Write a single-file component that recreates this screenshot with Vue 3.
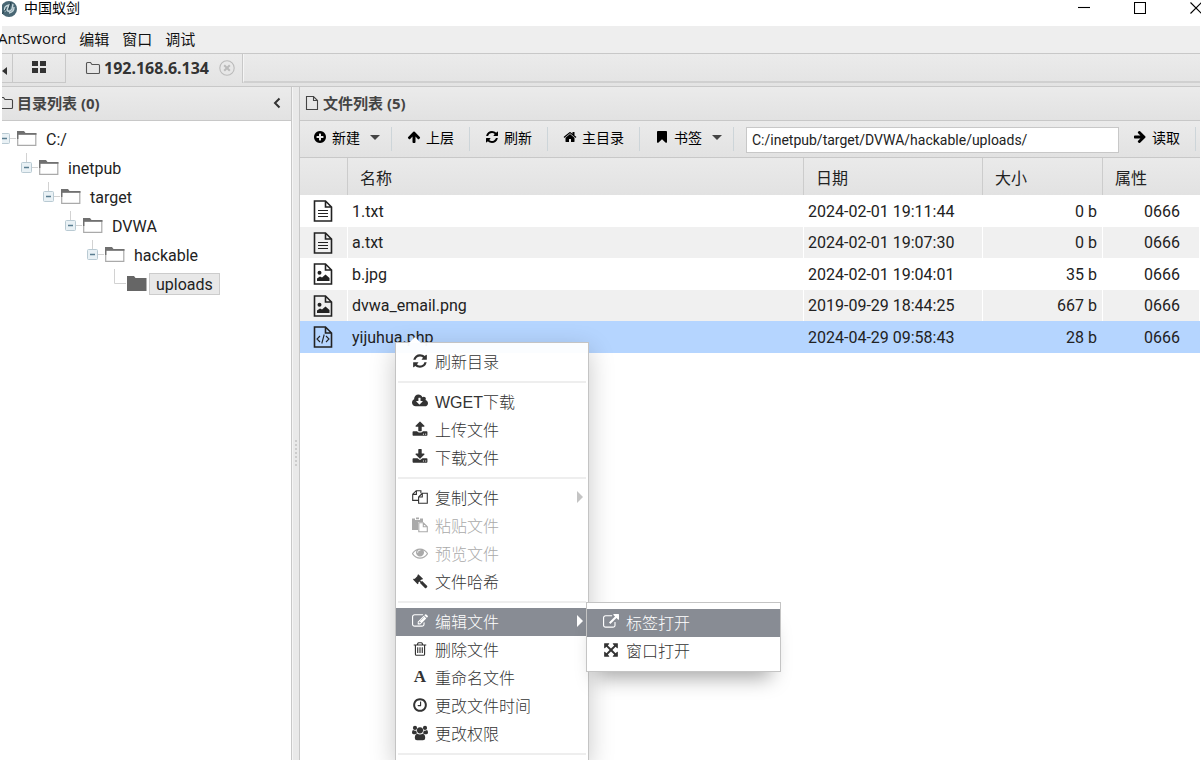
<script setup>
import { h, ref } from 'vue'

const icons = {
  plus: { d: 'M1344 960v-128q0-26-19-45t-45-19h-256v-256q0-26-19-45t-45-19h-128q-26 0-45 19t-19 45v256h-256q-26 0-45 19t-19 45v128q0 26 19 45t45 19h256v256q0 26 19 45t45 19h128q26 0 45-19t19-45v-256h256q26 0 45-19t19-45zm320-64q0 209-103 385.5t-279.5 279.5-385.5 103-385.5-103-279.5-279.5-103-385.5 103-385.5 279.5-279.5 385.5-103 385.5 103 279.5 279.5 103 385.5z' },
  up: { d: 'M1675 971q0 51-37 90l-75 75q-38 38-91 38-54 0-90-38l-294-293v704q0 52-37.5 84.5t-90.5 32.5h-128q-53 0-90.5-32.5t-37.5-84.5v-704l-294 293q-36 38-90 38t-90-38l-75-75q-38-38-38-90 0-53 38-91l651-651q35-37 90-37 54 0 91 37l651 651q37 39 37 91z' },
  refresh: { d: 'M1639 1056q0 5-1 7-64 268-268 434.5t-478 166.5q-146 0-282.5-55t-243.5-157l-129 129q-19 19-45 19t-45-19-19-45v-448q0-26 19-45t45-19h448q26 0 45 19t19 45-19 45l-137 137q71 66 161 102t187 36q134 0 250-65t186-179q11-17 53-117 8-23 30-23h192q13 0 22.5 9.5t9.5 22.5zm25-800v448q0 26-19 45t-45 19h-448q-26 0-45-19t-19-45 19-45l138-138q-148-137-349-137-134 0-250 65t-186 179q-11 17-53 117-8 23-30 23h-199q-13 0-22.5-9.5t-9.5-22.5v-7q65-268 270-434.5t480-166.5q146 0 284 55.5t245 156.5l130-129q19-19 45-19t45 19 19 45z' },
  home: { d: 'M1472 992v480q0 26-19 45t-45 19h-384v-384h-256v384h-384q-26 0-45-19t-19-45v-480q0-1 .5-3t.5-3l575-474 575 474q1 2 1 6zm223-69l-62 74q-8 9-21 11h-3q-13 0-21-7l-692-577-692 577q-12 8-24 7-13-2-21-11l-62-74q-8-10-7-23.5t11-21.5l719-599q32-26 76-26t76 26l244 204v-195q0-14 9-23t23-9h192q14 0 23 9t9 23v408l219 182q10 8 11 21.5t-7 23.5z' },
  bookmark: { d: 'M1420 128q23 0 44 9 33 13 52.5 41t19.5 62v1289q0 34-19.5 62t-52.5 41q-19 8-44 8-48 0-83-32l-441-424-441 424q-36 33-83 33-23 0-44-9-33-13-52.5-41t-19.5-62v-1289q0-34 19.5-62t52.5-41q21-9 44-9h1048z' },
  cloud: { box: '-64 0 1920 1792', d: 'M1216 928q0-14-9-23t-23-9h-224v-352q0-13-9.5-22.5t-22.5-9.5h-192q-13 0-22.5 9.5t-9.5 22.5v352h-224q-13 0-22.5 9.5t-9.5 22.5q0 14 9 23l352 352q9 9 23 9t23-9l351-351q10-12 10-24zm640 224q0 159-112.5 271.5t-271.5 112.5h-1088q-185 0-316.5-131.5t-131.5-316.5q0-130 70-240t188-165q-2-30-2-43 0-212 150-362t362-150q156 0 285.5 87t188.5 231q71-62 166-62 106 0 181 75t75 181q0 76-41 138 130 31 213.5 135.5t83.5 238.5z' },
  upload: { d: 'M1344 1472q0-26-19-45t-45-19-45 19-19 45 19 45 45 19 45-19 19-45zm256 0q0-26-19-45t-45-19-45 19-19 45 19 45 45 19 45-19 19-45zm128-224v320q0 40-28 68t-68 28h-1472q-40 0-68-28t-28-68v-320q0-40 28-68t68-28h427q21 56 70.5 92t110.5 36h256q61 0 110.5-36t70.5-92h427q40 0 68 28t28 68zm-325-648q-17 40-59 40h-256v448q0 26-19 45t-45 19h-256q-26 0-45-19t-19-45v-448h-256q-42 0-59-40-17-39 14-69l448-448q18-19 45-19t45 19l448 448q31 30 14 69z' },
  download: { d: 'M1344 1344q0-26-19-45t-45-19-45 19-19 45 19 45 45 19 45-19 19-45zm256 0q0-26-19-45t-45-19-45 19-19 45 19 45 45 19 45-19 19-45zm128-224v320q0 40-28 68t-68 28h-1472q-40 0-68-28t-28-68v-320q0-40 28-68t68-28h465l135 136q58 56 136 56t136-56l136-136h464q40 0 68 28t28 68zm-325-569q17 41-14 70l-448 448q-18 19-45 19t-45-19l-448-448q-31-29-14-70 17-39 59-39h256v-448q0-26 19-45t45-19h256q26 0 45 19t19 45v448h256q42 0 59 39z' },
  copy: { box: '0 0 16 16', line: 'M6.5 11.4H.7V5.2L4.2 1.7H8.9V4.3M4.4 1.8V5.4H.8M10.3 4.3H15.3V14.3H6.6V8L10.3 4.3ZM10.3 4.4V8H6.7' },
  paste: { box: '0 0 16 16', d: 'M0 1.5H3V3H8V1.500H11V5H6V13H0ZM4 .5H7V2.200H4Z', line: 'M6.800 5.800H11.300L15.300 9.800V14.700H6.800ZM11.300 5.800V9.800H15.300' },
  eye: { d: 'M1664 960q-152-236-381-353 61 104 61 225 0 185-131.5 316.5t-316.5 131.5-316.5-131.5-131.5-316.5q0-121 61-225-229 117-381 353 133 205 333.5 326.5t434.5 121.5 434.5-121.5 333.5-326.5zm-720-384q0-20-14-34t-34-14q-125 0-214.5 89.5t-89.5 214.5q0 20 14 34t34 14 34-14 14-34q0-86 61-147t147-61q20 0 34-14t14-34zm848 384q0 34-20 69-140 230-376.5 368.5t-499.5 138.5-499.5-139-376.5-368q-20-35-20-69t20-69q140-229 376.5-368t499.5-139 499.5 139 376.5 368q20 35 20 69z' },
  gavel: { box: '0 0 16 16', d: 'M6.3 1.2L11 5.8 10 6.8 9.4 6.5 8.2 7.7 9.2 8.6 10.2 8.1 15.2 13Q15.6 13.6 15 14.3L14.2 15Q13.5 15.5 12.9 14.9L8 10 8.4 9.4 7.5 8.4 6.2 9.7 6.6 10.2 5.6 11.2 1 6.5 2 5.5 2.6 5.9 5.7 2.8 5.3 2.2Z' },
  edit: { d: 'M888 1184l116-116-152-152-116 116v56h96v96h56zm440-720q-16-16-33 1l-350 350q-17 17-1 33t33-1l350-350q17-17 1-33zm80 594v190q0 119-84.5 203.5t-203.5 84.5h-832q-119 0-203.5-84.5t-84.5-203.5v-832q0-119 84.5-203.5t203.5-84.5h832q63 0 117 25 15 7 18 23 3 17-9 29l-49 49q-14 14-32 8-23-6-45-6h-832q-66 0-113 47t-47 113v832q0 66 47 113t113 47h832q66 0 113-47t47-113v-126q0-13 9-22l64-64q15-15 35-7t20 29zm-96-738l288 288-672 672h-288v-288zm444 132l-92 92-288-288 92-92q28-28 68-28t68 28l152 152q28 28 28 68t-28 68z' },
  trash: { d: 'M704 736v576q0 14-9 23t-23 9h-64q-14 0-23-9t-9-23v-576q0-14 9-23t23-9h64q14 0 23 9t9 23zm256 0v576q0 14-9 23t-23 9h-64q-14 0-23-9t-9-23v-576q0-14 9-23t23-9h64q14 0 23 9t9 23zm256 0v576q0 14-9 23t-23 9h-64q-14 0-23-9t-9-23v-576q0-14 9-23t23-9h64q14 0 23 9t9 23zm128 724v-948h-896v948q0 22 7 40.5t14.5 27 10.5 8.5h832q3 0 10.5-8.5t14.5-27 7-40.5zm-672-1076h448l-48-117q-7-9-17-11h-317q-10 2-17 11zm928 32v64q0 14-9 23t-23 9h-96v948q0 83-47 143.5t-113 60.5h-832q-66 0-113-58.5t-47-141.5v-952h-96q-14 0-23-9t-9-23v-64q0-14 9-23t23-9h309l70-167q15-37 54-63t79-26h320q40 0 79 26t54 63l70 167h309q14 0 23 9t9 23z' },
  clock: { d: 'M1024 544v448q0 14-9 23t-23 9h-320q-14 0-23-9t-9-23v-64q0-14 9-23t23-9h224v-352q0-14 9-23t23-9h64q14 0 23 9t9 23zm416 352q0-148-73-273t-198-198-273-73-273 73-198 198-73 273 73 273 198 198 273 73 273-73 198-198 73-273zm224 0q0 209-103 385.5t-279.5 279.5-385.5 103-385.5-103-279.5-279.5-103-385.5 103-385.5 279.5-279.5 385.5-103 385.5 103 279.5 279.5 103 385.5z' },
  users: { box: '0 0 16 16', d: 'M3 .8a2.1 2.1 0 1 1 0 4.2a2.1 2.1 0 1 1 0-4.2ZM13 .8a2.1 2.1 0 1 1 0 4.2a2.1 2.1 0 1 1 0-4.2ZM8 2.2a3.1 3.1 0 1 1 0 6.2a3.1 3.1 0 1 1 0-6.2ZM1 5Q2.9 6.2 4.3 5.5Q4.2 7.3 5.2 8.4Q3.8 8.5 3.2 9.2H1.5Q0 9.2 0 7.8Q0 5.5 1 5ZM15 5Q13.1 6.2 11.7 5.5Q11.8 7.3 10.8 8.4Q12.2 8.5 12.8 9.2H14.5Q16 9.2 16 7.8Q16 5.5 15 5ZM5.3 8.7Q8 10.3 10.7 8.7Q13.2 9 13.2 13Q13.2 15.2 11 15.2H5Q2.8 15.2 2.8 13Q2.8 9 5.3 8.7Z' },
  external: { d: 'M1408 928v320q0 119-84.5 203.5t-203.5 84.5h-832q-119 0-203.5-84.5t-84.5-203.5v-832q0-119 84.5-203.5t203.5-84.5h704q14 0 23 9t9 23v64q0 14-9 23t-23 9h-704q-66 0-113 47t-47 113v832q0 66 47 113t113 47h832q66 0 113-47t47-113v-320q0-14 9-23t23-9h64q14 0 23 9t9 23zm384-864v512q0 26-19 45t-45 19-45-19l-176-176-652 652q-10 10-23 10t-23-10l-114-114q-10-10-10-23t10-23l652-652-176-176q-19-19-19-45t19-45 45-19h512q26 0 45 19t19 45z' },
  expand: { d: 'M1411 541l-355 355 355 355 144-144q29-31 70-14 39 17 39 59v448q0 26-19 45t-45 19h-448q-42 0-59-40-17-39 14-69l144-144-355-355-355 355 144 144q31 30 14 69-17 40-59 40h-448q-26 0-45-19t-19-45v-448q0-42 40-59 39-17 69 14l144 144 355-355-355-355-144 144q-19 19-45 19-12 0-24-5-40-17-40-59v-448q0-26 19-45t45-19h448q42 0 59 40 17 39-14 69l-144 144 355 355 355-355-144-144q-31-30-14-69 17-40 59-40h448q26 0 45 19t19 45v448q0 42-39 59-13 5-25 5-26 0-45-19z' },
  grid: { box: '0 0 16 16', d: 'M1 2H7V7H1ZM9 2H15V7H9ZM1 9H7V14H1ZM9 9H15V14H9Z' },
  tabFolder: { box: '0 0 16 16', line: 'M1.5 3.5Q1.5 2.5 2.5 2.5H5.5L7 4.5H13.5Q14.5 4.5 14.5 5.5V12.5Q14.5 13.5 13.5 13.5H2.5Q1.5 13.5 1.5 12.5Z' },
  page: { box: '0 0 16 16', line: 'M2.5 1.5H9.5L13.5 5.5V14.5H2.5ZM9.5 1.5V5.5H13.5' },
  less: { box: '0 0 16 16', wide: 'M10.5 3.5L6 8L10.5 12.5' },
  close: { box: '0 0 16 16', line: 'M8 .8a7.2 7.2 0 1 1 0 14.4a7.2 7.2 0 1 1 0-14.4', wide: 'M5.2 5.2L10.8 10.8M10.8 5.2L5.2 10.8' },
  text: { box: '0 0 20 22', bold: 'M1.5 1H12.5L18.5 7V21H1.5ZM12.5 1V7H18.5', line: 'M5 10.5H15M5 13.5H15M5 16.5H15' },
  image: { box: '0 0 20 22', bold: 'M1.5 1H12.5L18.5 7V21H1.5ZM12.5 1V7H18.5', d: 'M6.5 7.8a2 2 0 1 1 0 4a2 2 0 1 1 0-4ZM4 18V15.5L7 13.5L9 14.5L12.5 11.5L16.500 15V18Z' },
  code: { box: '0 0 20 22', bold: 'M1.5 1H12.5L18.5 7V21H1.5ZM12.5 1V7H18.5', line: 'M7 10L4 13L7 16M13 10L16 13L13 16M11.2 8.5L8.8 17.5' },
  winMin: { box: '0 0 12 12', line: 'M0 5.5H12' },
  winMax: { box: '0 0 12 12', line: 'M.5.5H11.5V11.5H.5Z' },
  winClose: { box: '0 0 12 12', line: 'M.5.5L11.5 11.5M11.5.5L.5 11.5' }
}
icons.right = { d: icons.up.d, turn: 'rotate(90 896 896)' }

const Icon = (props) => {
  const i = icons[props.name]
  const stroke = (d, w) => d && h('path', { d, fill: 'none', stroke: 'currentColor', 'stroke-width': w })
  return h('svg', { viewBox: i.box || '0 0 1792 1792', 'aria-hidden': 'true' }, [
    i.d && h('path', { d: i.d, fill: 'currentColor', transform: i.turn }),
    stroke(i.line, 1.1),
    stroke(i.bold, 1.6),
    stroke(i.wide, 2)
  ])
}
Icon.props = ['name']

const path = ref('C:/inetpub/target/DVWA/hackable/uploads/')
const menus = ['AntSword', '编辑', '窗口', '调试']
const tree = ['C:/', 'inetpub', 'target', 'DVWA', 'hackable', 'uploads']
const tools = [
  { icon: 'plus', label: '新建', drop: true },
  { icon: 'up', label: '上层' },
  { icon: 'refresh', label: '刷新' },
  { icon: 'home', label: '主目录' },
  { icon: 'bookmark', label: '书签', drop: true }
]
const files = [
  { icon: 'text', name: '1.txt', date: '2024-02-01 19:11:44', size: '0 b' },
  { icon: 'text', name: 'a.txt', date: '2024-02-01 19:07:30', size: '0 b' },
  { icon: 'image', name: 'b.jpg', date: '2024-02-01 19:04:01', size: '35 b' },
  { icon: 'image', name: 'dvwa_email.png', date: '2019-09-29 18:44:25', size: '667 b' },
  { icon: 'code', name: 'yijuhua.php', date: '2024-04-29 09:58:43', size: '28 b', selected: true }
]
const groups = [
  [{ icon: 'refresh', label: '刷新目录' }],
  [
    { icon: 'cloud', label: 'WGET下载' },
    { icon: 'upload', label: '上传文件' },
    { icon: 'download', label: '下载文件' }
  ],
  [
    { icon: 'copy', label: '复制文件', sub: true },
    { icon: 'paste', label: '粘贴文件', off: true },
    { icon: 'eye', label: '预览文件', off: true },
    { icon: 'gavel', label: '文件哈希' }
  ],
  [
    { icon: 'edit', label: '编辑文件', sub: true, active: true },
    { icon: 'trash', label: '删除文件' },
    { letter: 'A', label: '重命名文件' },
    { icon: 'clock', label: '更改文件时间' },
    { icon: 'users', label: '更改权限' }
  ],
  []
]
const submenu = [
  { icon: 'external', label: '标签打开', active: true },
  { icon: 'expand', label: '窗口打开' }
]
</script>

<template>
  <div class="app">
    <header class="titlebar">
      <svg class="logo" viewBox="0 0 16 16" aria-hidden="true">
        <circle cx="7" cy="8" r="8" fill="#496774" />
        <path d="M3 11Q1 5 7 4L5 9Q7 12 10 8L11 3M7 12Q12 11 12 6" fill="none" stroke="#c8d8dd" stroke-width="1.4" />
        <path d="M0 13L4 8M9 1L7 8" stroke="#26404c" stroke-width="1" />
      </svg>
      <span class="title">中国蚁剑</span>
      <div class="winbtns">
        <button type="button" aria-label="最小化"><Icon name="winMin" /></button>
        <button type="button" aria-label="最大化"><Icon name="winMax" /></button>
        <button type="button" aria-label="关闭"><Icon name="winClose" /></button>
      </div>
    </header>

    <nav class="menubar">
      <button v-for="m in menus" :key="m" type="button">{{ m }}</button>
    </nav>

    <div class="tabs">
      <button class="scroll" type="button" aria-label="向左滚动"><span class="tri-left"></span></button>
      <button class="tab home" type="button" aria-label="主页"><Icon name="grid" /></button>
      <div class="tab current">
        <Icon name="tabFolder" class="tab-folder" />
        <span>192.168.6.134</span>
        <button class="close" type="button" aria-label="关闭标签"><Icon name="close" /></button>
      </div>
      <div class="tab-rest"></div>
    </div>

    <main class="body">
      <aside class="side">
        <div class="cell-head side-head">
          <Icon name="tabFolder" />
          <h2>目录列表 (0)</h2>
          <button type="button" aria-label="折叠"><Icon name="less" /></button>
        </div>
        <ul class="tree">
          <li v-for="(node, n) in tree" :key="node" :class="{ leaf: n === 5 }" :style="{ paddingLeft: n * 22 + 'px' }">
            <svg class="branch" viewBox="0 0 18 29" aria-hidden="true">
              <path v-if="n === 5" d="M5.5 0V14.5H17" fill="none" stroke="#d2d2d2" />
              <template v-else>
                <path :d="n ? 'M5.5 0V10M10 14.5H17' : 'M10 14.5H17'" fill="none" stroke="#d2d2d2" />
                <rect x=".5" y="9.5" width="10" height="10" rx="1" fill="#e9f1f5" stroke="#b9cad3" />
                <path d="M3 14.5H8" stroke="#5a7d90" stroke-width="1.5" />
              </template>
            </svg>
            <svg class="folder" viewBox="0 0 20 16" aria-hidden="true">
              <path v-if="n === 5" d="M0 0H7L8.500 2H19.500V15H0Z" fill="#666" />
              <template v-else>
                <path d="M.7 3V14.3H18.8V3Z" fill="#fff" stroke="#aaa" stroke-width="1.2" />
                <path d="M0 0H7L8.5 2H19.5V3.800H1.400V8H0Z" fill="#707070" />
              </template>
            </svg>
            <span class="label">{{ node }}</span>
          </li>
        </ul>
      </aside>

      <div class="splitter"><span></span></div>

      <section class="files">
        <div class="cell-head">
          <Icon name="page" />
          <h2>文件列表 (5)</h2>
        </div>
        <div class="toolbar">
          <template v-for="t in tools" :key="t.label">
            <button type="button" :class="{ drop: t.drop }">
              <Icon :name="t.icon" />{{ t.label }}<span v-if="t.drop" class="caret"></span>
            </button>
            <span class="divider"></span>
          </template>
          <input v-model="path" type="text" aria-label="路径" />
          <button type="button"><Icon name="right" />读取</button>
          <span class="divider last"></span>
        </div>
        <table>
          <colgroup>
            <col class="c-icon" /><col /><col class="c-date" /><col class="c-size" /><col class="c-attr" />
          </colgroup>
          <thead>
            <tr><th></th><th>名称</th><th>日期</th><th>大小</th><th>属性</th></tr>
          </thead>
          <tbody>
            <tr v-for="f in files" :key="f.name" :class="{ selected: f.selected }">
              <td class="ic"><Icon :name="f.icon" /></td>
              <td class="name">{{ f.name }}</td>
              <td>{{ f.date }}</td>
              <td class="num">{{ f.size }}</td>
              <td class="attr">0666</td>
            </tr>
          </tbody>
        </table>
      </section>
    </main>

    <div class="menu context">
      <span class="notch"></span>
      <div v-for="(g, gi) in groups" :key="gi" class="group">
        <button v-for="it in g" :key="it.label" type="button" :class="{ active: it.active }" :disabled="it.off">
          <span v-if="it.letter" class="letter">{{ it.letter }}</span>
          <Icon v-else :name="it.icon" />
          {{ it.label }}
          <span v-if="it.sub" class="tri"></span>
        </button>
      </div>
    </div>
    <div class="menu sub">
      <button v-for="it in submenu" :key="it.label" type="button" :class="{ active: it.active }">
        <Icon :name="it.icon" />{{ it.label }}
      </button>
    </div>
  </div>
</template>

<style>
body {
  margin: 0;
}
</style>

<style scoped>
* {
  box-sizing: border-box;
}
.app {
  --latin: Roboto, "Noto Sans CJK SC", sans-serif;
  --ui: "Open Sans", "Noto Sans CJK SC", sans-serif;
  position: relative;
  display: flex;
  flex-direction: column;
  height: 100vh;
  padding: 0 1px 0 2px;
  overflow: hidden;
  background: #fff;
  color: #222;
  font: 14px var(--ui);
}
button {
  display: flex;
  align-items: center;
  margin: 0;
  padding: 0;
  border: 0;
  background: none;
  color: inherit;
  font: inherit;
  white-space: nowrap;
}
svg {
  display: block;
  flex: none;
  width: 16px;
  height: 16px;
}
.titlebar {
  display: flex;
  flex: none;
  height: 26px;
  color: #000;
}
.logo {
  margin-top: 1px;
}
.title {
  flex: 1;
  padding-left: 6px;
  line-height: 16px;
}
.winbtns {
  display: flex;
  gap: 44px;
  height: 16px;
  margin-right: -2px;
}
.winbtns svg {
  width: 12px;
  height: 12px;
}
.menubar {
  display: flex;
  flex: none;
  gap: 13px;
  height: 27px;
  padding-bottom: 3px;
  background: #eee;
  color: #111;
  font-size: 15px;
}
.menubar button:first-child {
  margin-left: -4px;
}
.tabs {
  display: flex;
  flex: none;
  height: 34px;
  border-top: 1px solid #c8c8c8;
  border-bottom: 1px solid #c8c8c8;
  background: linear-gradient(#ebebeb, #e3e3e3);
}
.scroll {
  width: 10px;
  height: 29px;
  padding-top: 6px;
  border-bottom: 1px solid #c8c8c8;
}
.tri-left {
  border: 4px solid transparent;
  border-left: 0;
  border-right: 5px solid #333;
}
.tab {
  display: flex;
  align-items: center;
  height: 29px;
  padding-bottom: 2px;
}
.home {
  width: 54px;
  justify-content: center;
  border: solid #c8c8c8;
  border-width: 0 1px 1px;
  color: #333;
}
.current {
  gap: 3px;
  padding: 0 7px 2px 19px;
  border-right: 1px solid #c8c8c8;
  color: #333;
  font: bold 16px "Noto Sans", sans-serif;
}
.tab-folder {
  color: #555;
}
.close {
  margin-left: 7px;
  color: #bbb;
}
.tab-rest {
  flex: 1;
  height: 29px;
  border-bottom: 2px solid #d0d0d0;
  border-left: 1px solid #f5f5f5;
}
.body {
  display: flex;
  flex: 1;
  min-height: 0;
}
.side {
  flex: none;
  width: 290px;
  border-right: 1px solid #c8c8c8;
  overflow: hidden;
}
.cell-head {
  display: flex;
  align-items: center;
  gap: 3px;
  height: 34px;
  padding: 0 4px 2px;
  border-bottom: 1px solid #c8c8c8;
  background: linear-gradient(#ebebeb, #e2e2e2);
  color: #444;
}
.cell-head h2 {
  flex: 1;
  margin: 0;
  font: bold 15px "Noto Sans", "Noto Sans CJK SC", sans-serif;
}
.side-head {
  padding-left: 0;
}
.side-head > svg {
  margin-left: -4px;
}
.side-head button {
  margin-right: 2px;
  color: #333;
}
.tree {
  margin: 0;
  padding: 3px 0 0;
  list-style: none;
  font: 16px var(--latin);
}
.tree li {
  display: flex;
  align-items: center;
  height: 29px;
}
.branch {
  width: 18px;
  height: 29px;
  margin-left: -3px;
}
.folder {
  width: 20px;
  height: 16px;
}
.label {
  height: 22px;
  margin-left: 2px;
  padding: 0 6px;
  border: 1px solid transparent;
  line-height: 22px;
}
.leaf .label {
  border-color: #ccc;
  background: #e8e8e8;
}
.splitter {
  display: flex;
  flex: none;
  align-items: center;
  justify-content: center;
  width: 8px;
  border-left: 1px solid #f5f5f5;
  border-right: 1px solid #c8c8c8;
  background: #e9e9e9;
}
.splitter span {
  width: 2px;
  height: 28px;
  margin-top: 60px;
  background: repeating-linear-gradient(#ccc 0 2px, transparent 2px 4px);
}
.files {
  flex: 1;
  min-width: 0;
}
.toolbar {
  display: flex;
  align-items: center;
  height: 37px;
  padding-left: 13px;
  border-bottom: 1px solid #c8c8c8;
  background: linear-gradient(#ebebeb, #e2e2e2);
  color: #000;
}
.toolbar button {
  gap: 5px;
  height: 30px;
  padding-bottom: 4px;
}
.toolbar button svg {
  width: 14px;
  height: 14px;
}
.divider {
  width: 1px;
  height: 24px;
  margin: 0 15px;
  background: #cdd5d9;
}
.drop + .divider {
  margin-left: 11px;
}
.divider.last {
  margin-right: 4px;
}
.caret {
  margin-left: 5px;
  border: 5px solid transparent;
  border-top-color: #444;
  border-bottom: 0;
}
.toolbar input {
  flex: 1;
  min-width: 0;
  height: 26px;
  margin: 2px 14px 0 -3px;
  padding: 0 5px;
  border: 1px solid #c8c8c8;
  border-radius: 0;
  background: #fff;
  color: #222;
  font: 14px var(--latin);
}
table {
  width: 100%;
  border-collapse: separate;
  border-spacing: 0;
  table-layout: fixed;
  font: 16px var(--latin);
}
.c-icon {
  width: 48px;
}
.c-date {
  width: 179px;
}
.c-size {
  width: 120px;
}
.c-attr {
  width: 97px;
}
th {
  height: 37px;
  padding: 0 12px;
  border-right: 1px solid #ccc;
  background: linear-gradient(#eaeaea, #e2e2e2);
  font-weight: 400;
  text-align: left;
}
th:last-child {
  border-right: 0;
}
td {
  height: 32px;
  padding: 0 5px 0 4px;
  border-right: 1px solid #fff;
  white-space: nowrap;
}
tr:nth-child(even) td {
  height: 31px;
  background: #f0f0f0;
}
.selected td {
  border-right-color: #b5d5ff;
  background: #b5d5ff;
}
.ic {
  padding-left: 13px;
}
.ic svg {
  width: 20px;
  height: 22px;
}
.num {
  text-align: right;
}
.attr {
  padding-right: 19px;
  text-align: right;
}
.menu {
  position: absolute;
  border: 1px solid #c4c4c4;
  background: rgba(255, 255, 255, 0.95);
  color: #333;
  font: 300 16px "Liberation Sans", "Noto Sans CJK SC", sans-serif;
}
.context {
  top: 342px;
  bottom: 0;
  left: 395px;
  width: 194px;
  padding-top: 5px;
  border-bottom: 0;
  box-shadow: 0 8px 24px rgba(0, 0, 0, 0.22);
}
.sub {
  top: 602px;
  left: 586px;
  width: 195px;
  padding: 6px 0;
  background: #fff;
  box-shadow: 0 16px 20px -10px rgba(0, 0, 0, 0.35);
}
.menu button {
  gap: 7px;
  width: 100%;
  height: 28px;
  padding: 0 5px 3px 16px;
  text-align: left;
}
.menu button:disabled {
  color: #aaa;
}
.menu .active {
  background: #888c94;
  color: #fff;
}
.group + .group::before {
  display: block;
  height: 2px;
  margin: 5px 2px;
  background: #eee;
  content: "";
}
.letter {
  width: 16px;
  font: bold 17px "Liberation Serif", serif;
  text-align: center;
}
.tri {
  margin-left: auto;
  border: 6px solid transparent;
  border-right: 0;
  border-left-color: #c4c4c4;
}
.active .tri {
  border-left-color: #fff;
}
.notch {
  position: absolute;
  top: -6px;
  left: 13px;
  border: 6px solid transparent;
  border-top: 0;
  border-bottom-color: #fff;
}
</style>
